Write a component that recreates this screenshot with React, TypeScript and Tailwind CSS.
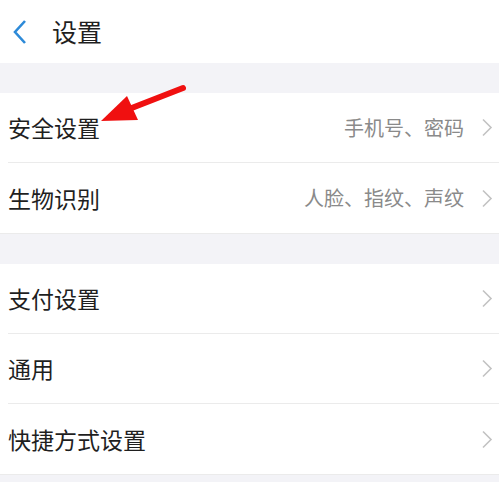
import React from 'react';

type Row = { label: string; value?: string };

const groups: Row[][] = [
  [
    { label: '安全设置', value: '手机号、密码' },
    { label: '生物识别', value: '人脸、指纹、声纹' },
  ],
  [{ label: '支付设置' }, { label: '通用' }, { label: '快捷方式设置' }],
];

function Chevron() {
  return (
    <svg width="12" height="19" viewBox="0 0 12 19" className="shrink-0">
      <path d="M2 1.5 L10 9.5 L2 17.5" fill="none" stroke="#c2c2c2" strokeWidth="1.6" />
    </svg>
  );
}

function SettingRow({ row, last }: { row: Row; last: boolean }) {
  return (
    <div className="flex h-[70px] items-center pl-2">
      <div
        className={
          'flex h-full flex-1 items-center pr-[6px] ' +
          (last ? '' : 'border-b border-[#ebebeb]')
        }
      >
        <span className="flex-1 text-[23px] leading-none text-[#1f1f1f]">{row.label}</span>
        {row.value && (
          <span className="mr-[17px] text-[20px] leading-none text-[#8a8a8a]">{row.value}</span>
        )}
        <Chevron />
      </div>
    </div>
  );
}

export default function App() {
  return (
    <div
      className="relative h-[482px] w-[499px] overflow-hidden bg-[#f3f3f7]"
      style={{ fontFamily: '"Noto Sans CJK SC", "Noto Sans", sans-serif' }}
    >
      <div className="flex h-[63px] items-center bg-white">
        <svg width="16" height="26" viewBox="0 0 16 26" className="ml-[12px]">
          <path d="M13 2 L3 13 L13 24" fill="none" stroke="#2d8ad8" strokeWidth="2.6" />
        </svg>
        <span className="ml-[24px] text-[25px] leading-none text-[#1f1f1f]">设置</span>
      </div>

      <div className="mt-[30px] flex flex-col gap-[30px]">
        {groups.map((g, gi) => (
          <div key={gi} className="border-b border-[#ebebeb] bg-white">
            {g.map((row, ri) => (
              <SettingRow key={row.label} row={row} last={ri === g.length - 1} />
            ))}
          </div>
        ))}
      </div>

      {/* red annotation arrow */}
      <svg
        className="pointer-events-none absolute left-0 top-0"
        width="499"
        height="482"
        viewBox="0 0 499 482"
      >
        <line x1="183" y1="88" x2="124" y2="111" stroke="#f01010" strokeWidth="6" strokeLinecap="round" />
        <polygon points="101,121 127,96 138,120" fill="#f01010" />
      </svg>
    </div>
  );
}
